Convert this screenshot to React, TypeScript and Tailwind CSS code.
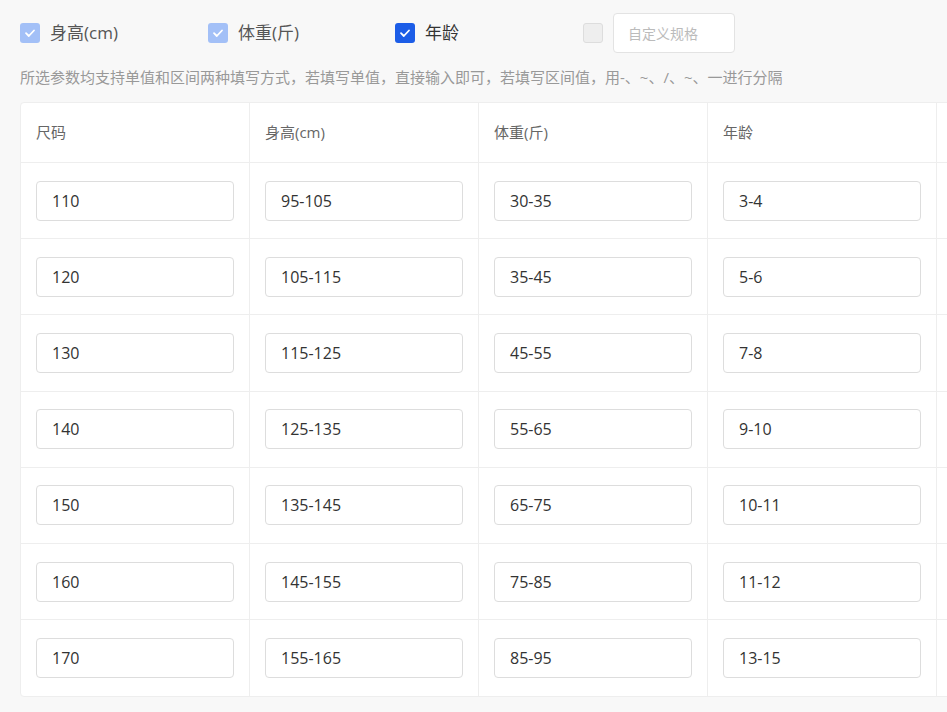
import React from "react";

const rows = [
  ["110", "95-105", "30-35", "3-4"],
  ["120", "105-115", "35-45", "5-6"],
  ["130", "115-125", "45-55", "7-8"],
  ["140", "125-135", "55-65", "9-10"],
  ["150", "135-145", "65-75", "10-11"],
  ["160", "145-155", "75-85", "11-12"],
  ["170", "155-165", "85-95", "13-15"],
];

const headers = ["尺码", "身高(cm)", "体重(斤)", "年龄", ""];

function Check({ variant }: { variant: "light" | "dark" | "off" }) {
  const cls =
    variant === "light"
      ? "bg-[#a3c0f7]"
      : variant === "dark"
      ? "bg-[#1c5de7]"
      : "bg-[#eeeeee] border border-[#dddddd]";
  return (
    <span className={`w-[20px] h-[20px] rounded-[3px] flex items-center justify-center ${cls}`}>
      {variant !== "off" && (
        <svg width="14" height="14" viewBox="0 0 14 14" fill="none">
          <path d="M3 7.2 L5.8 10 L11 4.5" stroke="white" strokeWidth="1.8" strokeLinecap="round" strokeLinejoin="round" />
        </svg>
      )}
    </span>
  );
}

export default function App() {
  return (
    <div
      className="w-[947px] h-[712px] overflow-hidden bg-[#f8f8f8] text-[#333]"
      style={{ fontFamily: '"Open Sans", "Noto Sans CJK SC", sans-serif' }}
    >
      <div className="flex items-center h-[64px] pt-[2px] pl-[20px]">
        <div className="flex items-center w-[188px]">
          <Check variant="light" />
          <span className="ml-[10px] text-[17px] text-[#555]">身高(cm)</span>
        </div>
        <div className="flex items-center w-[187px]">
          <Check variant="light" />
          <span className="ml-[10px] text-[17px] text-[#555]">体重(斤)</span>
        </div>
        <div className="flex items-center w-[188px]">
          <Check variant="dark" />
          <span className="ml-[10px] text-[17px] text-[#333]">年龄</span>
        </div>
        <div className="flex items-center">
          <Check variant="off" />
          <div className="ml-[10px] w-[122px] h-[40px] bg-white border border-[#e3e3e3] rounded-[4px] flex items-center pl-[14px] text-[14px] text-[#bbb]">
            自定义规格
          </div>
        </div>
      </div>
      <div className="pl-[20px] h-[26px] text-[15px] text-[#999] leading-[26px] whitespace-nowrap">
        所选参数均支持单值和区间两种填写方式，若填写单值，直接输入即可，若填写区间值，用-、~、/、~、一进行分隔
      </div>
      <div className="pl-[20px] pt-[12px]">
        <div className="w-[1200px] bg-white border border-[#eeeeee] rounded-[4px]">
          <div className="flex h-[60px] border-b border-[#eeeeee]">
            {headers.map((h, i) => (
              <div
                key={i}
                className="w-[229px] shrink-0 border-r border-[#eeeeee] flex items-center pl-[15px] text-[15px] text-[#666]"
              >
                {h}
              </div>
            ))}
          </div>
          {rows.map((r, ri) => (
            <div key={ri} className={`flex h-[76.2px] ${ri < rows.length - 1 ? "border-b border-[#eeeeee]" : ""}`}>
              {r.map((v, ci) => (
                <div key={ci} className="w-[229px] shrink-0 border-r border-[#eeeeee] flex items-center pl-[15px]">
                  <div className="w-[198px] h-[40px] border border-[#dddddd] rounded-[4px] flex items-center pl-[15px] text-[16px] text-[#333]">
                    {v}
                  </div>
                </div>
              ))}
              <div className="w-[229px] shrink-0" />
            </div>
          ))}
        </div>
      </div>
    </div>
  );
}
